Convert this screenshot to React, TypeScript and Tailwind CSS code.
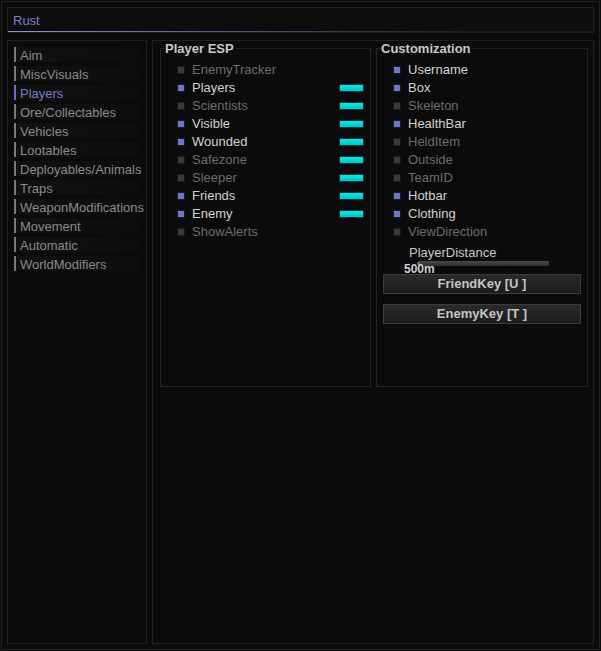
import React from 'react';

const tabs = [
  'Aim',
  'MiscVisuals',
  'Players',
  'Ore/Collectables',
  'Vehicles',
  'Lootables',
  'Deployables/Animals',
  'Traps',
  'WeaponModifications',
  'Movement',
  'Automatic',
  'WorldModifiers',
];

interface Option {
  label: string;
  on: boolean;
  color?: boolean;
}

const espOptions: Option[] = [
  { label: 'EnemyTracker', on: false },
  { label: 'Players', on: true, color: true },
  { label: 'Scientists', on: false, color: true },
  { label: 'Visible', on: true, color: true },
  { label: 'Wounded', on: true, color: true },
  { label: 'Safezone', on: false, color: true },
  { label: 'Sleeper', on: false, color: true },
  { label: 'Friends', on: true, color: true },
  { label: 'Enemy', on: true, color: true },
  { label: 'ShowAlerts', on: false },
];

const customOptions: Option[] = [
  { label: 'Username', on: true },
  { label: 'Box', on: true },
  { label: 'Skeleton', on: false },
  { label: 'HealthBar', on: true },
  { label: 'HeldItem', on: false },
  { label: 'Outside', on: false },
  { label: 'TeamID', on: false },
  { label: 'Hotbar', on: true },
  { label: 'Clothing', on: true },
  { label: 'ViewDirection', on: false },
];

const CheckRow: React.FC<{ option: Option }> = ({ option }) => (
  <div className="h-[18px] flex items-center pl-[16px] pr-[6px]">
    <span
      className={
        option.on
          ? 'w-[8px] h-[8px] shrink-0 border border-[#1a1a2a] bg-[#7075c6]'
          : 'w-[8px] h-[8px] shrink-0 border border-[#1a1a1a] bg-[#3b3b3b]'
      }
    />
    <span className={option.on ? 'ml-[7px] text-[#d2d2d2]' : 'ml-[7px] text-[#6c6c6c]'}>
      {option.label}
    </span>
    {option.color && (
      <span className="ml-auto w-[25px] h-[8px] border border-[#063838] bg-gradient-to-b from-[#10e6e6] to-[#00c4c4]" />
    )}
  </div>
);

const GroupBox: React.FC<{ title: string; className: string; children: React.ReactNode }> = ({
  title,
  className,
  children,
}) => (
  <fieldset className={`h-[346px] border border-[#232323] ${className}`}>
    <legend className="ml-[4px] pr-[2px] pt-px font-bold text-[13px] leading-[14px] text-[#c8c8c8]">
      {title}
    </legend>
    <div className="pt-[5px]">{children}</div>
  </fieldset>
);

const KeyButton: React.FC<{ label: string; className?: string }> = ({ label, className }) => (
  <div
    className={`mx-[6px] h-[20px] flex items-center justify-center border border-[#3c3c3c] bg-gradient-to-b from-[#2a2a2a] to-[#1c1c1c] font-bold text-[13px] text-[#c4c4c4] ${className ?? ''}`}
  >
    {label}
  </div>
);

export default function App() {
  return (
    <div className="w-[601px] h-[651px] bg-[#0b0b0b] p-px font-['Liberation_Sans',Arial,sans-serif] text-[13px]">
      <div className="h-full border border-[#222] px-[5px] pt-[5px] pb-[5px] flex flex-col gap-[7px]">
        {/* title bar */}
        <div className="h-[26px] border border-[#222] bg-[#0d0d0d] flex flex-col">
          <div className="flex-1 flex items-center pl-[5px] pt-[2px] text-[#7b80cc]">Rust</div>
          <div className="h-px bg-gradient-to-r from-[#9096dc] via-[#3a3c58] via-55% to-[#1a1a1a] to-80%" />
        </div>

        <div className="flex-1 flex gap-[5px]">
          {/* tab list */}
          <div className="w-[141px] border border-[#222] pl-[6px] pt-[6px]">
            {tabs.map((tab) => {
              const active = tab === 'Players';
              return (
                <div key={tab} className="w-[126px] h-[15px] mb-[4px] flex items-center bg-gradient-to-r from-[#111] to-[#0d0d0d]">
                  <span className={active ? 'w-[2px] h-full shrink-0 bg-[#6a70c4]' : 'w-[2px] h-full shrink-0 bg-[#7a7a7a]'} />
                  <span
                    className={
                      active
                        ? 'ml-[4px] pt-[2px] whitespace-nowrap leading-[15px] text-[#767cca]'
                        : 'ml-[4px] pt-[2px] whitespace-nowrap leading-[15px] text-[#8a8a8a]'
                    }
                  >
                    {tab}
                  </span>
                </div>
              );
            })}
          </div>

          {/* content */}
          <div className="flex-1 border border-[#222] pl-[7px] pr-[5px] flex gap-[5px] items-start">
            <GroupBox title="Player ESP" className="w-[211px]">
              {espOptions.map((o) => (
                <CheckRow key={o.label} option={o} />
              ))}
            </GroupBox>

            <GroupBox title="Customization" className="w-[212px]">
              {customOptions.map((o) => (
                <CheckRow key={o.label} option={o} />
              ))}
              <div className="mt-[4px] h-[14px] pl-[32px] pt-px leading-[14px] text-[#c8c8c8]">PlayerDistance</div>
              <div className="relative h-[13px]">
                <div className="mt-[2px] ml-[41px] w-[131px] h-[5px] bg-gradient-to-b from-[#4a4a4a] to-[#2e2e2e]" />
                <span className="absolute left-[40px] top-[1px] w-[3px] h-[3px] rounded-full bg-[#6a70c4]" />
                <span className="absolute left-[27px] top-[2px] font-bold text-[12px] leading-[12px] text-[#cfcfcf]">
                  500m
                </span>
              </div>
              <KeyButton label="FriendKey [U ]" />
              <KeyButton label="EnemyKey [T ]" className="mt-[10px]" />
            </GroupBox>
          </div>
        </div>
      </div>
    </div>
  );
}
